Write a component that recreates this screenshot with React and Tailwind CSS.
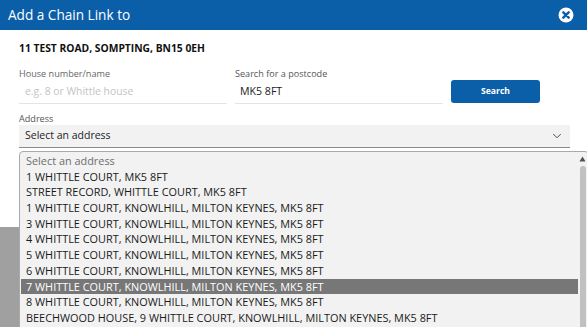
import { ChevronDown } from "lucide-react";

const addresses = [
    "1 WHITTLE COURT, MK5 8FT",
    "STREET RECORD, WHITTLE COURT, MK5 8FT",
    "1 WHITTLE COURT, KNOWLHILL, MILTON KEYNES, MK5 8FT",
    "3 WHITTLE COURT, KNOWLHILL, MILTON KEYNES, MK5 8FT",
    "4 WHITTLE COURT, KNOWLHILL, MILTON KEYNES, MK5 8FT",
    "5 WHITTLE COURT, KNOWLHILL, MILTON KEYNES, MK5 8FT",
    "6 WHITTLE COURT, KNOWLHILL, MILTON KEYNES, MK5 8FT",
    "7 WHITTLE COURT, KNOWLHILL, MILTON KEYNES, MK5 8FT",
    "8 WHITTLE COURT, KNOWLHILL, MILTON KEYNES, MK5 8FT",
    "BEECHWOOD HOUSE, 9 WHITTLE COURT, KNOWLHILL, MILTON KEYNES, MK5 8FT",
];

const CloseIcon = () => (
    <svg width="16" height="16" viewBox="0 0 16 16">
        <circle cx="8" cy="8" r="7.5" fill="#fff" />
        <path d="M5.3 5.3 L10.7 10.7 M10.7 5.3 L5.3 10.7" stroke="#0b5ea8" strokeWidth="2.4" strokeLinecap="round" />
    </svg>
);

const App = () => {
    const selected = "7 WHITTLE COURT, KNOWLHILL, MILTON KEYNES, MK5 8FT";

    return (
        <div className="w-[587px] h-[327px] overflow-hidden bg-[#a0a0a0] font-['Open_Sans',sans-serif]">
            {/* Modal */}
            <div className="bg-white h-[227px]">
                <div className="h-[30px] bg-[#0b5ea8] flex items-center justify-between pl-[8px] pr-[13px]">
                    <h1 className="text-white text-[13.6px] leading-none">Add a Chain Link to</h1>
                    <CloseIcon />
                </div>

                <div className="pl-[19px] pr-[17px]">
                    <p className="pt-[10px] text-[10.3px] font-bold text-[#111] leading-[16px]">
                        11 TEST ROAD, SOMPTING, BN15 0EH
                    </p>

                    <div className="flex items-end gap-[8px] mt-[11px]">
                        <div className="w-[208px]">
                            <label className="block text-[9.1px] text-[#666] leading-[14px]">House number/name</label>
                            <div className="h-[23px] border-b border-[#e3e3e3] flex items-center pl-[6px] text-[10.4px] text-[#c4c4c4]">
                                e.g. 8 or Whittle house
                            </div>
                        </div>
                        <div className="w-[208px]">
                            <label className="block text-[9.1px] text-[#555] leading-[14px]">Search for a postcode</label>
                            <div className="h-[23px] border-b border-[#e3e3e3] flex items-center pl-[5px] text-[10.6px] text-[#222]">
                                MK5 8FT
                            </div>
                        </div>
                        <button className="w-[89px] h-[23px] mb-[1px] rounded-[3px] bg-[#0b5ea8] text-white text-[8.6px] font-bold">
                            Search
                        </button>
                    </div>

                    <label className="block mt-[8px] text-[9.1px] text-[#555] leading-[13px]">Address</label>
                    <div className="relative">
                        <div className="h-[23px] bg-[#f2f2f2] border-b border-[#8a8a8a] flex items-center justify-between pl-[6px] pr-[6px] text-[10.5px] text-[#222]">
                            <span>Select an address</span>
                            <ChevronDown size={14} strokeWidth={1.5} className="text-[#333]" />
                        </div>

                        {/* Open dropdown list */}
                        <div className="absolute left-0 top-[26px] w-[570px] h-[200px] bg-[#f2f2f2] border border-[#a9a9a9] rounded-[4px] flex pl-[1px] pt-[1px]">
                            <ul className="flex-1 text-[10.9px] text-[#1a1a1a]">
                                <li className="h-[15.7px] leading-[15.7px] pl-[5px] text-[#6d6d6d]">Select an address</li>
                                {addresses.map((address) => (
                                    <li
                                        key={address}
                                        className={address === selected
                                            ? "h-[15.7px] leading-[15.7px] pl-[5px] bg-[#777] text-white"
                                            : "h-[15.7px] leading-[15.7px] pl-[5px]"}
                                    >
                                        {address}
                                    </li>
                                ))}
                            </ul>
                            {/* Scrollbar */}
                            <div className="w-[9px] mr-[1px] flex flex-col items-center">
                                <svg width="7" height="6" viewBox="0 0 7 6" className="mt-[3px]">
                                    <path d="M3.5 0.5 L6.5 5.5 L0.5 5.5 Z" fill="#505050" />
                                </svg>
                                <div className="w-[6px] flex-1 mt-[4px] rounded-[3px] bg-[#c1c1c1]" />
                            </div>
                        </div>
                    </div>
                </div>
            </div>
        </div>
    );
};

export default App;
